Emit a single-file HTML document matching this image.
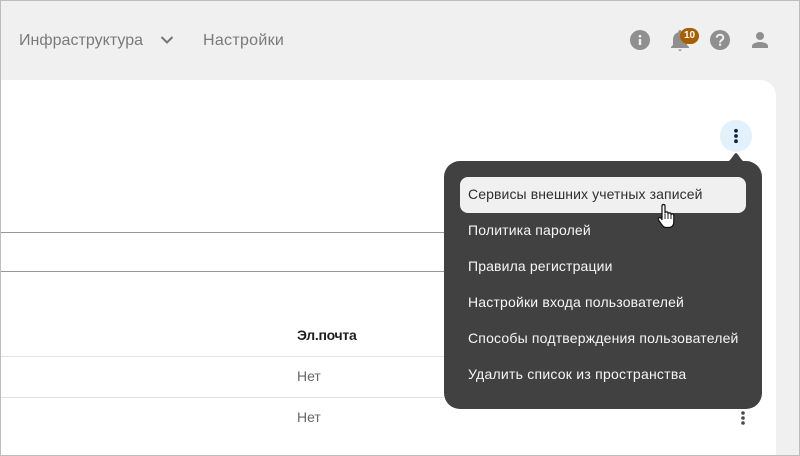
<!DOCTYPE html>
<html lang="ru">
<head>
<meta charset="utf-8">
<title>Настройки</title>
<style>
html,body{margin:0;padding:0;width:800px;height:456px;overflow:hidden;background:#f0f0f0;}
body{position:relative;font-family:"Liberation Sans",sans-serif;}
.abs{position:absolute;white-space:nowrap;}
.nav{font-size:16px;color:#7a7a7a;top:31px;line-height:20px;}
.card{position:absolute;left:0;top:80px;width:776px;height:376px;background:#fff;border-top-right-radius:16px;}
.line{position:absolute;left:0;height:1px;}
.menu{position:absolute;left:444px;top:161px;width:318px;height:248px;background:#414141;border-radius:16px;}
.sel{position:absolute;left:460px;top:177px;width:286px;height:36px;background:#f0f0f0;border-radius:8px;}
.mi{position:absolute;left:468px;font-size:14px;line-height:20px;color:#f6f6f6;white-space:nowrap;}
.frame{position:absolute;left:0;top:0;width:798px;height:454px;border:1px solid #bdbdbd;pointer-events:none;}
</style>
</head>
<body>
<div class="abs nav" style="left:19px;letter-spacing:.03px">Инфраструктура</div>
<svg class="abs" style="left:158px;top:32px" width="18" height="16" viewBox="0 0 18 16"><path d="M3.500 5l5.500 5.500L14.500 5" fill="none" stroke="#757575" stroke-width="2"/></svg>
<div class="abs nav" style="left:203px;letter-spacing:.3px">Настройки</div>

<svg class="abs" style="left:630px;top:30px" width="20" height="20" viewBox="0 0 20 20"><circle cx="10" cy="10" r="10" fill="#8f8f8f"/><rect x="8.800" y="9" width="2.400" height="6" fill="#f0f0f0"/><rect x="8.800" y="5" width="2.400" height="2.400" fill="#f0f0f0"/></svg>
<svg class="abs" style="left:668px;top:27px" width="24" height="26" viewBox="0 0 24 26"><path d="M12 3c-.9 0-1.500.6-1.500 1.500v.8C6.800 6.100 5 9.300 5 13v5l-2 2v1h18v-1l-2-2v-5c0-3.700-1.800-6.900-5.500-7.700v-.8C13.500 3.600 12.900 3 12 3z" fill="#8f8f8f"/><path d="M10.500 22.500h3a1.500 1.500 0 0 1-3 0z" fill="#8f8f8f"/></svg>
<div class="abs" style="left:680px;top:28px;width:19px;height:16px;border-radius:8px;background:#a85f00;color:#fff;font-size:10px;font-weight:bold;line-height:16px;text-align:center">10</div>
<svg class="abs" style="left:710px;top:30px" width="20" height="20" viewBox="0 0 20 20"><circle cx="10" cy="10" r="10" fill="#8f8f8f"/><path d="M6.700 7.700C6.800 5.800 8.200 4.800 10 4.800c1.900 0 3.300 1.100 3.300 2.800 0 2.500-3.200 2.500-3.200 5" fill="none" stroke="#f0f0f0" stroke-width="2"/><rect x="9" y="13.600" width="2.200" height="2.200" fill="#f0f0f0"/></svg>
<svg class="abs" style="left:750px;top:31px" width="20" height="18" viewBox="0 0 20 18"><circle cx="10" cy="5" r="4" fill="#8f8f8f"/><path d="M2 17v-2c0-2.700 5.300-4 8-4s8 1.300 8 4v2z" fill="#8f8f8f"/></svg>

<div class="card"></div>
<div class="line" style="top:232px;width:444px;background:#979797"></div>
<div class="line" style="top:271px;width:444px;background:#979797"></div>
<div class="line" style="top:356px;width:444px;background:#e2e2e2"></div>
<div class="line" style="top:397px;width:444px;background:#e2e2e2"></div>
<div class="abs" style="left:297px;top:325px;font-size:14px;line-height:20px;color:#1f1f1f;font-weight:bold;letter-spacing:-.3px">Эл.почта</div>
<div class="abs" style="left:297px;top:366px;font-size:14px;line-height:20px;color:#666">Нет</div>
<div class="abs" style="left:297px;top:407px;font-size:14px;line-height:20px;color:#666">Нет</div>

<svg class="abs" style="left:719px;top:120px" width="34" height="34" viewBox="0 0 34 34"><circle cx="17" cy="16" r="16" fill="#e3f1fd"/><circle cx="17" cy="10.800" r="1.900" fill="#10263f"/><circle cx="17" cy="16" r="1.900" fill="#10263f"/><circle cx="17" cy="21.200" r="1.900" fill="#10263f"/></svg>
<div class="menu"></div>
<svg class="abs" style="left:726px;top:152px" width="20" height="10" viewBox="0 0 20 10"><path d="M1 10C5 9 8 1 10 1s5 8 9 9z" fill="#414141"/></svg>
<div class="sel"></div>
<div class="mi" style="top:184px;color:#2f2f2f;letter-spacing:.1px">Сервисы внешних учетных записей</div>
<div class="mi" style="top:220px;letter-spacing:.16px">Политика паролей</div>
<div class="mi" style="top:256px;letter-spacing:.14px">Правила регистрации</div>
<div class="mi" style="top:292px;letter-spacing:.18px">Настройки входа пользователей</div>
<div class="mi" style="top:328px;letter-spacing:.19px">Способы подтверждения пользователей</div>
<div class="mi" style="top:364px;letter-spacing:.24px">Удалить список из пространства</div>
<svg class="abs" style="left:656px;top:203px" width="22" height="26" viewBox="0 0 22 26"><path d="M6 3c0-2 3-2 3 0v7c0-1.500 3-1.500 3 0v1c0-1.500 3-1.500 3 0v1c0-1.500 2.800-1.500 2.800.5V19c0 3-1.800 5.500-4.800 5.500H10c-2 0-3-1-4-2.500l-3.500-5c-1-1.800 1.300-3.300 2.500-1.800L6 16.500z" fill="#fff" stroke="#111" stroke-width="1.200" stroke-linejoin="round"/><path d="M9 11v5M12 11v5M15 12v4" stroke="#111" stroke-width=".9" fill="none"/></svg>
<svg class="abs" style="left:738px;top:410px" width="10" height="18" viewBox="0 0 10 18"><circle cx="5" cy="3" r="1.800" fill="#4a4a4a"/><circle cx="5" cy="8" r="1.800" fill="#4a4a4a"/><circle cx="5" cy="13" r="1.800" fill="#4a4a4a"/></svg>
<div class="frame"></div>
</body>
</html>
